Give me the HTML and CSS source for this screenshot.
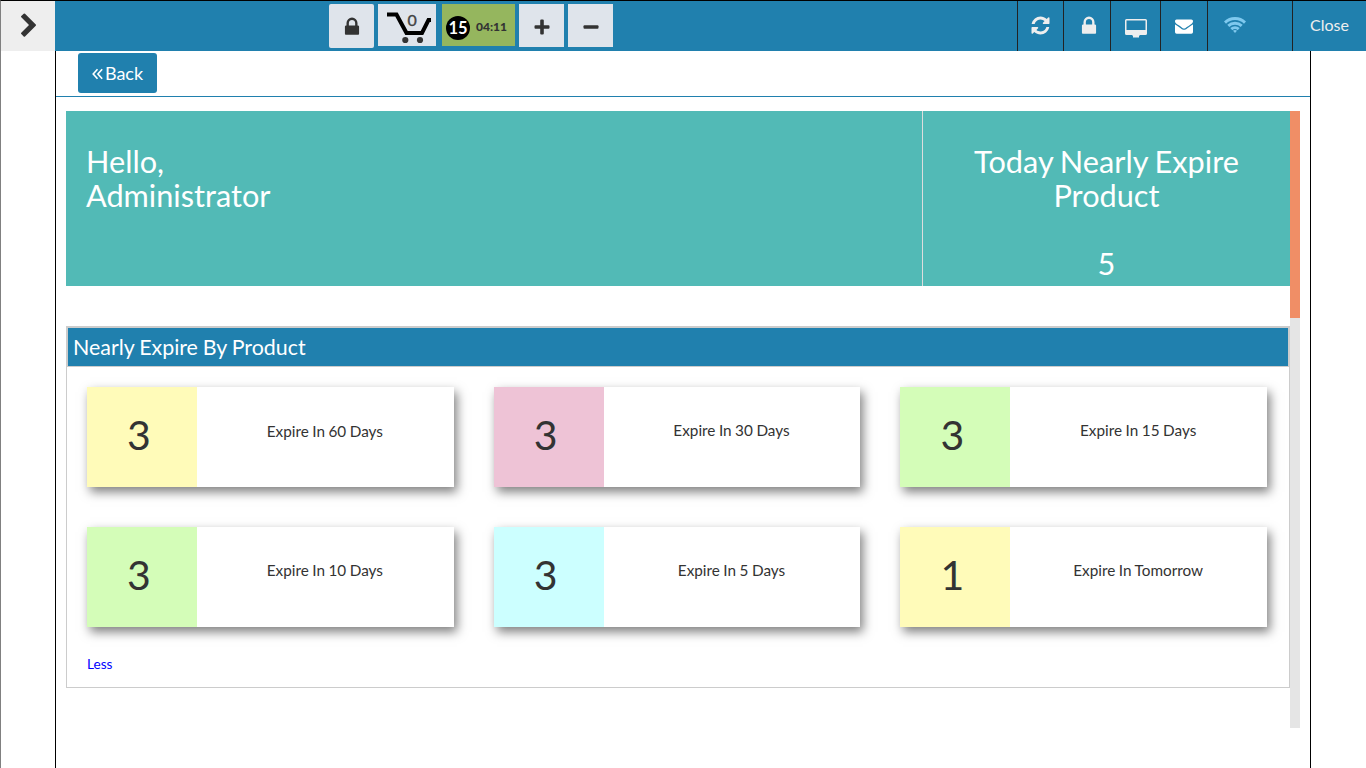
FILE: index.html
```
<!DOCTYPE html>
<html lang="en">
<head>
<meta charset="utf-8">
<title>Nearly Expire Products</title>
<link rel="stylesheet" href="styles.css">
</head>
<body>
<div class="app">
  <header class="topbar">
    <button class="menu-toggle" aria-label="Menu"><svg width="26" height="26" viewBox="0 0 1792 1792"><path d="M1363 877l-742 742q-19 19-45 19t-45-19l-166-166q-19-19-19-45t19-45l531-531-531-531q-19-19-19-45t19-45l166-166q19-19 45-19t45 19l742 742q19 19 19 45t-19 45z"/></svg></button>
    <div class="tools">
      <button class="tool tool-lock" aria-label="Lock"><svg width="22" height="22" viewBox="0 0 1792 1792"><path d="M640 768h512v-192q0-106-75-181t-181-75-181 75-75 181v192zm832 96v576q0 40-28 68t-68 28h-960q-40 0-68-28t-28-68v-576q0-40 28-68t68-28h32v-192q0-184 132-316t316-132 316 132 132 316v192h32q40 0 68 28t28 68z"/></svg></button>
      <button class="tool tool-cart" aria-label="Cart"><svg width="44" height="32" viewBox="0 0 44 32"><path d="M0 2.500H9.500L19.500 21H35L41.500 8H44" fill="none" stroke="#000" stroke-width="4"/><circle cx="18.300" cy="28" r="3.100"/><circle cx="33" cy="28" r="3.100"/></svg><span class="cart-count">0</span></button>
      <div class="tool tool-timer"><span class="timer-badge">15</span><span class="timer-text">04:11</span></div>
      <button class="tool tool-step" aria-label="Increase"><svg width="16" height="16" viewBox="0 0 16 16"><path d="M6.200 1.500q0-1 1-1h1.600q1 0 1 1v4.700h4.700q1 0 1 1v1.600q0 1-1 1H9.800v4.700q0 1-1 1H7.200q-1 0-1-1V9.800H1.500q-1 0-1-1V7.200q0-1 1-1h4.700z"/></svg></button>
      <button class="tool tool-step" aria-label="Decrease"><svg width="16" height="16" viewBox="0 0 16 16"><rect x=".5" y="6.200" width="15" height="3.600" rx="1"/></svg></button>
    </div>
    <nav class="status">
      <a class="cell cell-refresh"><svg width="21" height="21" viewBox="0 0 1792 1792"><path d="M1639 1056q0 5-1 7-64 268-268 434.500t-478 166.500q-146 0-282.500-55t-243.500-157l-129 129q-19 19-45 19t-45-19-19-45v-448q0-26 19-45t45-19h448q26 0 45 19t19 45-19 45l-137 137q71 66 161 102t187 36q134 0 250-65t186-179q11-17 53-117 8-23 30-23h192q13 0 22.500 9.500t9.500 22.500zm25-800v448q0 26-19 45t-45 19h-448q-26 0-45-19t-19-45 19-45l138-138q-148-137-349-137-134 0-250 65t-186 179q-11 17-53 117-8 23-30 23h-199q-13 0-22.500-9.500t-9.500-22.500v-7q65-268 270-434.500t480-166.500q146 0 284 55.500t245 156.500l130-129q19-19 45-19t45 19 19 45z"/></svg></a>
      <a class="cell cell-lock"><svg width="22" height="22" viewBox="0 0 1792 1792"><path d="M640 768h512v-192q0-106-75-181t-181-75-181 75-75 181v192zm832 96v576q0 40-28 68t-68 28h-960q-40 0-68-28t-28-68v-576q0-40 28-68t68-28h32v-192q0-184 132-316t316-132 316 132 132 316v192h32q40 0 68 28t28 68z"/></svg></a>
      <a class="cell cell-screen"><svg width="22" height="19" viewBox="0 0 22 19"><path fill-rule="evenodd" d="M1.500 0h19q1.500 0 1.500 1.500v13q0 1.500-1.500 1.500H14.500v1h-.5v1.500H8V17h-.5V16H1.500Q0 16 0 14.500v-13Q0 0 1.500 0zM1.500 1.500v9.500h19v-9.500z"/></svg></a>
      <a class="cell cell-mail"><svg width="18" height="18" viewBox="0 0 1792 1792"><path d="M1792 710v794q0 66-47 113t-113 47h-1472q-66 0-113-47t-47-113v-794q44 49 101 87 362 246 497 345 57 42 92.500 65.500t94.500 48 110 24.500h2q51 0 110-24.500t94.500-48 92.500-65.500q170-123 498-345 57-39 100-87zm0-294q0 79-49 151t-122 123q-376 261-468 325-10 7-42.500 31t-54 38.500-52 32.500-57.500 27-50 9h-2q-23 0-50-9t-57.500-27-52-32.500-54-38.500-42.500-31q-91-64-262-182.500t-205-142.500q-62-42-117-115.500t-55-136.500q0-78 41.500-130t118.500-52h1472q65 0 112.500 47t47.500 113z"/></svg></a>
      <a class="cell cell-wifi"><svg width="22" height="16" viewBox="0 0 22 16"><g fill="none" stroke="#7fc9ee" stroke-width="2.900"><path d="M1 5.600a14.400 14.400 0 0 1 20 0"/><path d="M4.300 8.900a9.800 9.800 0 0 1 13.400 0"/><path d="M7.300 12.100a5.400 5.400 0 0 1 7.400 0"/></g><path d="M11 16l-2-2.200a3 3 0 0 1 4 0z" fill="#7fc9ee"/></svg></a>
      <a class="cell cell-close">Close</a>
    </nav>
  </header>
  <main class="page">
    <div class="backbar">
      <a class="back"><svg width="11" height="12" viewBox="0 0 11 12"><path d="M5.500 1.200L1.200 6 5.500 10.800M10.200 1.200L5.900 6 10.200 10.800" fill="none" stroke="#fff" stroke-width="1.600"/></svg><span>Back</span></a>
    </div>
    <div class="viewport">
      <div class="content">
        <section class="banner">
          <div class="greeting"><div>Hello,</div><div>Administrator</div></div>
          <div class="today"><div>Today Nearly Expire Product</div><div class="today-count">5</div></div>
        </section>
        <section class="panel">
          <h2 class="panel-title">Nearly Expire By Product</h2>
          <div class="cards">
            <div class="card"><div class="count yellow">3</div><div class="label low">Expire In 60 Days</div></div>
            <div class="card"><div class="count pink">3</div><div class="label">Expire In 30 Days</div></div>
            <div class="card"><div class="count green">3</div><div class="label">Expire In 15 Days</div></div>
            <div class="card"><div class="count green">3</div><div class="label">Expire In 10 Days</div></div>
            <div class="card"><div class="count cyan">3</div><div class="label">Expire In 5 Days</div></div>
            <div class="card"><div class="count yellow">1</div><div class="label">Expire In Tomorrow</div></div>
          </div>
          <a class="less">Less</a>
        </section>
      </div>
      <div class="scrollbar"><div class="thumb"></div></div>
    </div>
  </main>
</div>
</body>
</html>
```
FILE: styles.css
```
* { box-sizing: border-box; }
body { margin: 0; font-family: Lato, "Liberation Sans", sans-serif; color: #333; background: #fff; overflow: hidden; }
svg { display: block; fill: currentColor; flex: none; }
button { border: 0; padding: 0; font: inherit; color: inherit; }
.app { height: 768px; border-top: 1px solid #000; border-left: 1px solid #808080; display: flex; flex-direction: column; }

.topbar { height: 50px; flex: none; display: flex; background: #2080ae; }
.menu-toggle { width: 54px; background: #eee; padding: 0 0 0 15px; display: flex; align-items: center; }
.tools { flex: 1; display: flex; align-items: flex-start; padding: 3px 0 0 274px; }
.tool { background: #dfe4eb; display: flex; align-items: center; justify-content: center; }
.tool-lock { width: 45px; height: 44px; border-radius: 2px; margin-right: 4px; padding-top: 2px; }
.tool-cart { position: relative; width: 58px; height: 42px; margin-right: 6px; padding: 6px 0 0 3px; }
.cart-count { position: absolute; left: 29.5px; top: 6px; font-size: 16px; line-height: 20px; color: #444; -webkit-text-stroke: .4px #444; }
.tool-timer { width: 73px; height: 42px; margin-right: 4px; background: #95b65e; justify-content: flex-start; padding: 6px 0 0 4px; gap: 6px; }
.timer-badge { width: 24px; height: 24px; border-radius: 50%; background: #000; color: #fff; font-size: 16.5px; font-weight: 700; line-height: 25px; text-align: center; }
.timer-text { font-size: 12px; font-weight: 900; padding-bottom: 3px; }
.tool-step { width: 45px; height: 43px; margin-right: 4px; padding-top: 3px; }

.status { display: flex; color: #eee; }
.cell { border-left: 1px solid #222; display: flex; align-items: center; justify-content: center; }
.cell-refresh { width: 46px; padding-bottom: 1px; }
.cell-lock { width: 47px; padding-left: 4px; }
.cell-screen { width: 50px; padding-top: 4px; }
.cell-mail { width: 47px; color: #fff; }
.cell-wifi { width: 85px; align-items: flex-start; justify-content: flex-start; padding: 16px 0 0 16px; }
.cell-close { width: 74px; font-size: 16px; padding-bottom: 3px; }

.page { flex: 1; margin: 0 55px 0 54px; border: solid #000; border-width: 0 1px; }
.backbar { height: 46px; border-bottom: 1px solid #2080ae; padding: 2px 0 0 22px; }
.back { width: 79px; height: 40px; border-radius: 3px; background: #2080ae; color: #fff; display: flex; align-items: center; justify-content: center; gap: 2px; font-size: 18px; }
.back svg { margin-top: 2px; }
.viewport { display: flex; height: 617px; margin: 14px 10px 0; }
.content { flex: 1; }
.scrollbar { width: 10px; background: #e5e5e5; }
.thumb { height: 207px; background: #f08e66; }

.banner { display: flex; height: 175px; background: #52bab6; color: #fff; font-size: 30.7px; line-height: 34px; word-spacing: -1px; }
.greeting { width: 856px; padding: 34px 20px; }
.today { flex: 1; border-left: 1px solid #ddd; padding: 34px 40px 0; text-align: center; }
.today-count { margin-top: 34px; }

.panel { margin-top: 40px; height: 362px; border: 1px solid #ccc; }
.panel-title { margin: 0; height: 40px; border: 1px solid #ccc; background: #2080ae; color: #fff; font-size: 21.4px; font-weight: 400; line-height: 38px; padding-left: 5px; word-spacing: -.6px; }
.cards { display: grid; grid-template-columns: repeat(3, 1fr); gap: 40px; padding: 20px 22px 0 20px; }
.card { display: flex; height: 100px; background: #fff; box-shadow: 3px 5px 10px rgba(0,0,0,.5); }
.count { width: 110px; font-size: 41px; line-height: 95px; text-align: center; padding-right: 6px; }
.label { flex: 1; font-size: 15.3px; line-height: 20px; padding: 33px 1px 0 0; text-align: center; word-spacing: -.4px; }
.low { padding-top: 34px; }
.yellow { background: #fffbb9; }
.pink { background: #eec3d6; }
.green { background: #d4fdb8; }
.cyan { background: #ccffff; }
.less { display: block; margin: 29px 0 0 20px; font-size: 13.6px; line-height: 16px; color: #00f; }
```
